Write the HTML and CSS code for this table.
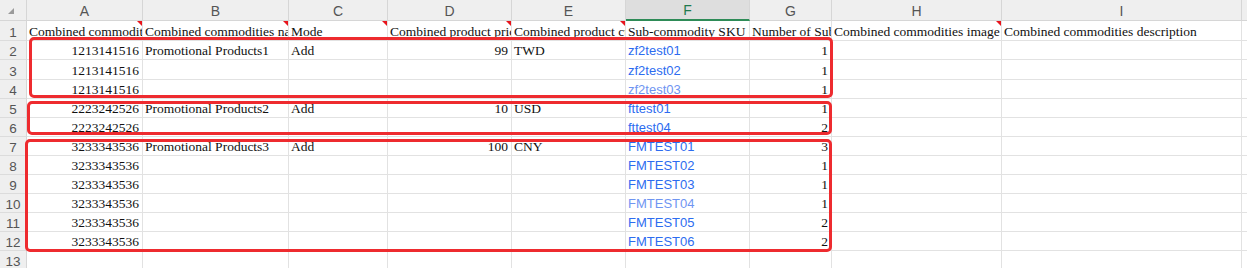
FILE: index.html
```html
<!DOCTYPE html>
<html>
<head>
<meta charset="utf-8">
<link rel="stylesheet" href="styles.css">
</head>
<body>
<div class="sheet">
  <div class="grid">
    <div class="corner"><span class="corner-tri"></span></div>
    <div class="colhead">A</div>
    <div class="colhead">B</div>
    <div class="colhead">C</div>
    <div class="colhead">D</div>
    <div class="colhead">E</div>
    <div class="colhead sel">F</div>
    <div class="colhead">G</div>
    <div class="colhead">H</div>
    <div class="colhead">I</div>
    <div class="colhead"></div>

    <div class="rowhead">1</div>
    <div class="cell note">Combined commodity ID</div>
    <div class="cell note">Combined commodities name</div>
    <div class="cell note">Mode</div>
    <div class="cell note">Combined product price</div>
    <div class="cell note">Combined product currency</div>
    <div class="cell">Sub-commodity SKU code</div>
    <div class="cell">Number of Sub-commodity</div>
    <div class="cell note">Combined commodities image</div>
    <div class="cell">Combined commodities description</div>
    <div class="cell"></div>

    <div class="rowhead">2</div>
    <div class="cell num">1213141516</div>
    <div class="cell">Promotional Products1</div>
    <div class="cell">Add</div>
    <div class="cell num">99</div>
    <div class="cell">TWD</div>
    <div class="cell sku">zf2test01</div>
    <div class="cell num">1</div>
    <div class="cell"></div><div class="cell"></div><div class="cell"></div>

    <div class="rowhead">3</div>
    <div class="cell num">1213141516</div>
    <div class="cell"></div><div class="cell"></div><div class="cell"></div><div class="cell"></div>
    <div class="cell sku">zf2test02</div>
    <div class="cell num">1</div>
    <div class="cell"></div><div class="cell"></div><div class="cell"></div>

    <div class="rowhead">4</div>
    <div class="cell num">1213141516</div>
    <div class="cell"></div><div class="cell"></div><div class="cell"></div><div class="cell"></div>
    <div class="cell sku light">zf2test03</div>
    <div class="cell num">1</div>
    <div class="cell"></div><div class="cell"></div><div class="cell"></div>

    <div class="rowhead">5</div>
    <div class="cell num">2223242526</div>
    <div class="cell">Promotional Products2</div>
    <div class="cell">Add</div>
    <div class="cell num">10</div>
    <div class="cell">USD</div>
    <div class="cell sku">fttest01</div>
    <div class="cell num">1</div>
    <div class="cell"></div><div class="cell"></div><div class="cell"></div>

    <div class="rowhead">6</div>
    <div class="cell num">2223242526</div>
    <div class="cell"></div><div class="cell"></div><div class="cell"></div><div class="cell"></div>
    <div class="cell sku">fttest04</div>
    <div class="cell num">2</div>
    <div class="cell"></div><div class="cell"></div><div class="cell"></div>

    <div class="rowhead">7</div>
    <div class="cell num">3233343536</div>
    <div class="cell">Promotional Products3</div>
    <div class="cell">Add</div>
    <div class="cell num">100</div>
    <div class="cell">CNY</div>
    <div class="cell sku">FMTEST01</div>
    <div class="cell num">3</div>
    <div class="cell"></div><div class="cell"></div><div class="cell"></div>

    <div class="rowhead">8</div>
    <div class="cell num">3233343536</div>
    <div class="cell"></div><div class="cell"></div><div class="cell"></div><div class="cell"></div>
    <div class="cell sku">FMTEST02</div>
    <div class="cell num">1</div>
    <div class="cell"></div><div class="cell"></div><div class="cell"></div>

    <div class="rowhead">9</div>
    <div class="cell num">3233343536</div>
    <div class="cell"></div><div class="cell"></div><div class="cell"></div><div class="cell"></div>
    <div class="cell sku">FMTEST03</div>
    <div class="cell num">1</div>
    <div class="cell"></div><div class="cell"></div><div class="cell"></div>

    <div class="rowhead">10</div>
    <div class="cell num">3233343536</div>
    <div class="cell"></div><div class="cell"></div><div class="cell"></div><div class="cell"></div>
    <div class="cell sku light">FMTEST04</div>
    <div class="cell num">1</div>
    <div class="cell"></div><div class="cell"></div><div class="cell"></div>

    <div class="rowhead">11</div>
    <div class="cell num">3233343536</div>
    <div class="cell"></div><div class="cell"></div><div class="cell"></div><div class="cell"></div>
    <div class="cell sku">FMTEST05</div>
    <div class="cell num">2</div>
    <div class="cell"></div><div class="cell"></div><div class="cell"></div>

    <div class="rowhead">12</div>
    <div class="cell num">3233343536</div>
    <div class="cell"></div><div class="cell"></div><div class="cell"></div><div class="cell"></div>
    <div class="cell sku">FMTEST06</div>
    <div class="cell num">2</div>
    <div class="cell"></div><div class="cell"></div><div class="cell"></div>

    <div class="rowhead">13</div>
    <div class="cell"></div><div class="cell"></div><div class="cell"></div><div class="cell"></div>
    <div class="cell"></div><div class="cell"></div><div class="cell"></div><div class="cell"></div>
    <div class="cell"></div><div class="cell"></div>
  </div>
  <div class="mark mark1"></div>
  <div class="mark mark2"></div>
  <div class="mark mark3"></div>
</div>
</body>
</html>
```

FILE: styles.css
```css
* { box-sizing: border-box; }
html, body {
  margin: 0;
  padding: 0;
  background: #ffffff;
  overflow: hidden;
}
.sheet {
  position: relative;
  width: 1247px;
  height: 268px;
  overflow: hidden;
}
.grid {
  display: grid;
  grid-template-columns: 27px 116px 146px 99px 124px 114px 124px 82px 170px 240px 40px;
  grid-template-rows: 21px 20px 19px 20px 19px 19px 19px 19px 19px 19px 19px 19px 19px 19px;
}
.corner {
  background: #efefef;
  border-right: 1px solid #d6d6d6;
  border-bottom: 1px solid #d6d6d6;
  position: relative;
}
.corner-tri {
  position: absolute;
  left: 8px;
  top: 8px;
  width: 0;
  height: 0;
  border-left: 6px solid transparent;
  border-bottom: 6px solid #9a9a9a;
}
.colhead {
  background: #efefef;
  border-right: 1px solid #d6d6d6;
  border-bottom: 1px solid #d6d6d6;
  display: flex;
  align-items: center;
  justify-content: center;
  font-family: "Liberation Sans", Arial, sans-serif;
  font-size: 14px;
  color: #555555;
  padding-top: 1px;
}
.colhead.sel {
  background: #dedede;
  color: #1f7a4d;
  border-bottom: 2px solid #2e8b57;
}
.rowhead {
  background: #efefef;
  border-right: 1px solid #d6d6d6;
  border-bottom: 1px solid #dcdcdc;
  display: flex;
  align-items: center;
  justify-content: center;
  font-family: "Liberation Sans", Arial, sans-serif;
  font-size: 13.5px;
  color: #555555;
  padding-top: 3px;
}
.cell {
  position: relative;
  border-right: 1px solid #e2e2e2;
  border-bottom: 1px solid #e2e2e2;
  display: flex;
  align-items: flex-end;
  padding: 0 3px 1px 2px;
  font-family: "Liberation Serif", "Times New Roman", serif;
  font-size: 13.5px;
  line-height: 15px;
  color: #111111;
  white-space: nowrap;
  overflow: hidden;
}
.cell.num {
  justify-content: flex-end;
}
.cell.sku {
  font-family: "Liberation Sans", Arial, sans-serif;
  font-size: 13px;
  line-height: 15px;
  color: #2d6cf0;
}
.cell.sku.light {
  color: #6f95f2;
}
.cell.note::after {
  content: "";
  position: absolute;
  top: 0;
  right: 0;
  width: 0;
  height: 0;
  border-left: 5px solid transparent;
  border-top: 5px solid #e8141c;
}
.mark {
  position: absolute;
  border: 3px solid #ee2b2f;
  border-radius: 5px;
}
.mark1 { left: 29px; top: 37px; width: 804px; height: 61px; }
.mark2 { left: 27px; top: 101px; width: 805px; height: 34px; }
.mark3 { left: 25px; top: 139px; width: 807px; height: 113px; }
```
